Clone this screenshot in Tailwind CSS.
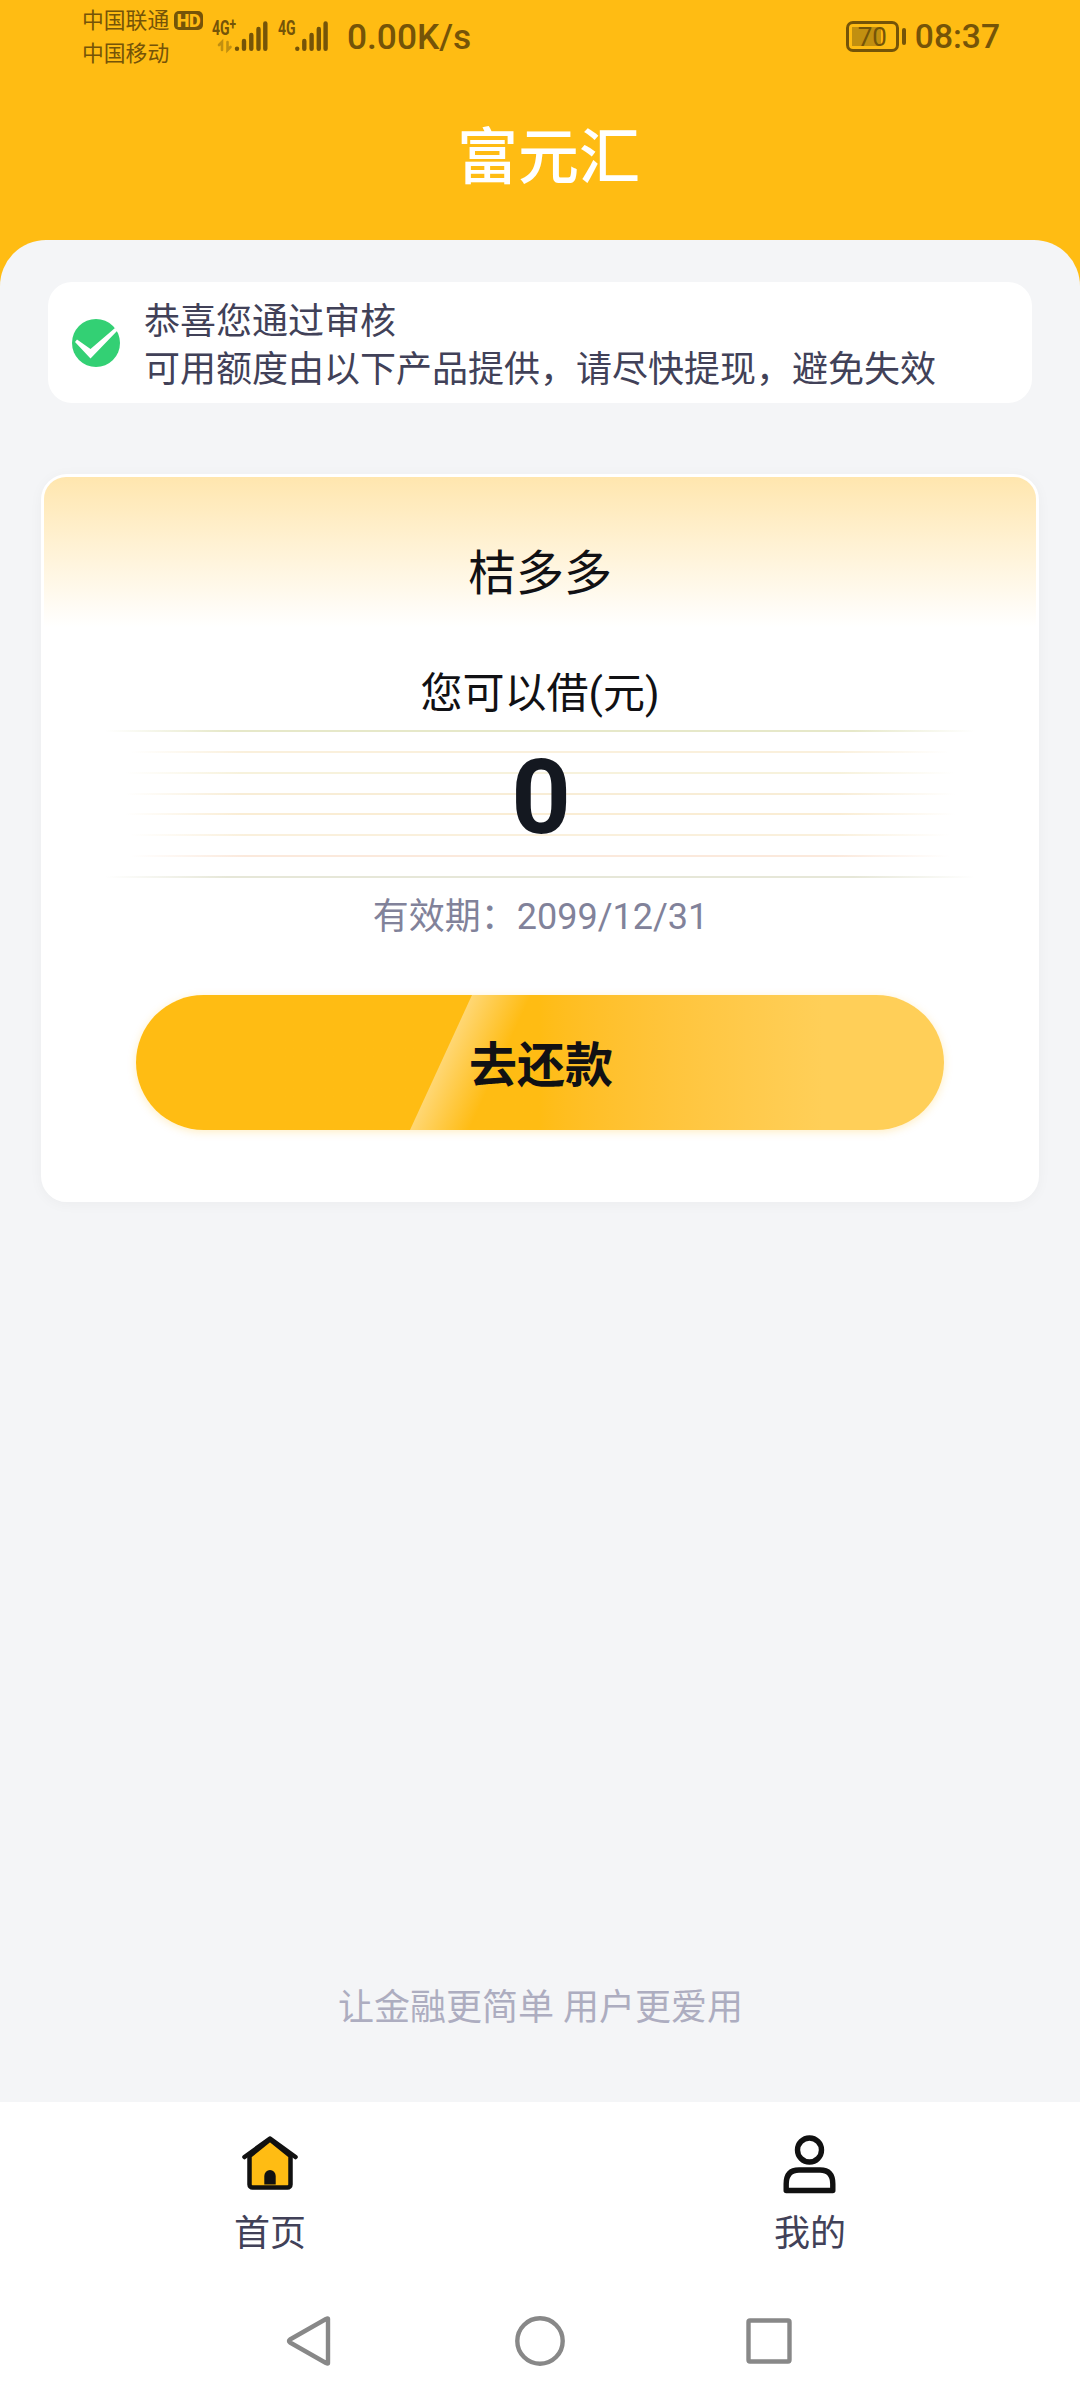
<!DOCTYPE html>
<html lang="zh-CN">
<head>
<meta charset="utf-8">
<title>富元汇</title>
<script src="https://cdn.jsdelivr.net/npm/@tailwindcss/browser@4"></script>
</head>
<body class="w-[1080px] h-[2400px] overflow-hidden bg-[#f4f5f7] font-['Roboto','Noto_Sans_CJK_SC',sans-serif] text-[#111114] flex flex-col">
  <header class="h-[300px] shrink-0 bg-[#ffbc13] flex flex-col">
    <!-- status bar -->
    <div class="h-[74px] flex items-start pl-[82px] pr-[80px] text-[#755408]">
      <div class="w-[88px] flex flex-col text-[21.8px] leading-[33px] pt-[4px] whitespace-nowrap"><span>中国联通</span><span>中国移动</span></div>
      <div class="ml-[4px] mt-[11px] w-[29px] h-[19px] rounded-[5px] bg-[#755408] text-[#ffbc13] text-[18px] leading-[20px] font-black text-center tracking-tight">HD</div>
      <div class="ml-[9px] w-[56px] flex relative">
        <span class="text-[20px] leading-[20px] mt-[18px] font-bold inline-block origin-left scale-x-[0.7] whitespace-nowrap">4G<span class="relative -top-[5px] text-[17px] leading-[0]">+</span></span>
        <svg class="absolute left-0 top-[20px]" width="58" height="34" viewBox="0 0 58 34" fill="none" stroke="#755408" stroke-width="4.4" stroke-linecap="round"><path d="M25 28.6v.1M32 21v7.700M39.300 15v13.700M46.500 9v19.700M53.300 3.500v25.200"/><path d="M7 25l3-3v8M15.500 22v8l3-3" stroke="#c18f10" stroke-width="2.600"/></svg>
      </div>
      <div class="ml-[10px] w-[52px] flex relative">
        <span class="text-[20px] leading-[20px] mt-[18px] font-bold inline-block origin-left scale-x-[0.7]">4G</span>
        <svg class="absolute left-0 top-[20px]" width="58" height="34" viewBox="0 0 58 34" fill="none" stroke="#755408" stroke-width="4.4" stroke-linecap="round"><path d="M19.300 28.600v.1M26.300 21v7.700M33.600 15v13.700M40.800 9v19.700M47.600 3.500v25.200"/></svg>
      </div>
      <span class="ml-[17px] mt-[17px] text-[35.3px] leading-[41px] font-medium">0.00K/s</span>
      <div class="ml-auto flex">
        <div class="mt-[21px] w-[53px] h-[31px] border-[3px] border-[#755408] rounded-[7px] flex relative p-[3px]">
          <div class="w-[29px] h-[19px] bg-[#c18f10]"></div>
          <span class="absolute inset-0 text-center text-[26px] leading-[26px]">70</span>
        </div>
        <div class="mt-[28px] ml-[3px] w-[4px] h-[17px] rounded-full bg-[#755408]"></div>
        <span class="ml-[9px] mt-[17px] text-[33.600px] leading-[40px] font-medium">08:37</span>
      </div>
    </div>
    <h1 class="h-[166px] flex justify-center pt-[40px] pl-[17px] text-[61px] leading-[88px] font-medium text-white">富元汇</h1>
  </header>

  <main class="-mt-[60px] h-[1862px] shrink-0 bg-[#f4f5f7] rounded-t-[46px] flex flex-col pt-[42px]">
    <section class="mx-[48px] h-[121px] bg-white rounded-[24px] flex items-center pl-[24px] text-[36px] leading-[48px] text-[#414158]">
      <svg width="48" height="48" viewBox="0 0 48 48"><circle cx="24" cy="24" r="24" fill="#33d074"/><path d="M3 23L5 20.500L18.500 30L43 9L45.500 11.500L18.500 39.500z" fill="#fff"/></svg>
      <div class="ml-[24px] pt-[6px]"><p>恭喜您通过审核</p><p>可用额度由以下产品提供，请尽快提现，避免失效</p></div>
    </section>

    <section class="mt-[71px] mx-[41px] h-[728px] bg-white border-3 border-white rounded-[26px] shadow-[0_2px_14px_rgba(0,0,0,0.04)] flex flex-col items-center">
      <div class="w-full h-[150px] shrink-0 rounded-t-[22px] bg-linear-to-b from-[#ffe6ae] to-white flex justify-center pt-[61px]">
        <h2 class="text-[48px] leading-[72px]">桔多多</h2>
      </div>
      <p class="mt-[37px] text-[42px] leading-[60px]">您可以借(元)</p>
      <div class="mt-[6px] relative w-[870px] h-[148px] flex flex-col items-center justify-between">
        <i class="block w-full h-[2px] bg-[linear-gradient(to_right,transparent,#e6e8c9_14%,#e6e8c9_86%,transparent)]"></i>
        <i class="block w-[820px] h-[2px] bg-[linear-gradient(to_right,transparent,#faf0dc_14%,#faf0dc_86%,transparent)]"></i>
        <i class="block w-[830px] h-[2px] bg-[linear-gradient(to_right,transparent,#f7f2dc_14%,#f7f2dc_86%,transparent)]"></i>
        <i class="block w-[830px] h-[2px] bg-[linear-gradient(to_right,transparent,#f8edd6_14%,#f8edd6_86%,transparent)]"></i>
        <i class="block w-[830px] h-[2px] bg-[linear-gradient(to_right,transparent,#faedd4_14%,#faedd4_86%,transparent)]"></i>
        <i class="block w-[820px] h-[2px] bg-[linear-gradient(to_right,transparent,#faf0dc_14%,#faf0dc_86%,transparent)]"></i>
        <i class="block w-[820px] h-[2px] bg-[linear-gradient(to_right,transparent,#fbe9dc_14%,#fbe9dc_86%,transparent)]"></i>
        <i class="block w-full h-[2px] bg-[linear-gradient(to_right,transparent,#e6e7d8_14%,#e6e7d8_86%,transparent)]"></i>
        <strong class="absolute inset-x-0 top-[6px] pl-[2px] text-center text-[104px] leading-[124px] font-bold text-[#141820]">0</strong>
      </div>
      <p class="mt-[13px] pl-[1px] text-[36px] leading-[52px] text-[#81829a]">有效期：2099/12/31</p>
      <button class="mt-[52px] w-[808px] h-[135px] shrink-0 rounded-full relative overflow-hidden bg-linear-to-r from-[#ffbc13] from-50% to-[#ffcf58] to-85% shadow-[0_2px_8px_rgba(255,188,19,0.25)] flex items-center justify-center">
        <svg class="absolute left-[274px] top-0" width="130" height="135" viewBox="0 0 130 135"><defs><linearGradient id="g" gradientUnits="userSpaceOnUse" x1="31" y1="67" x2="80" y2="89.500"><stop stop-color="#ffd774"/><stop offset="1" stop-color="#ffd774" stop-opacity="0"/></linearGradient></defs><path d="M62 0h68L68 135H0z" fill="url(#g)"/></svg>
        <span class="relative pt-[6px] pl-[2px] text-[48px] leading-[70px] font-bold">去还款</span>
      </button>
    </section>
    <p class="mt-auto mb-[68px] pl-[1px] text-center text-[36px] leading-[52px] text-[#adadc0]">让金融更简单 用户更爱用</p>
  </main>

  <nav class="h-[168px] shrink-0 bg-white grid grid-cols-2 text-[36px] leading-[52px] text-[#414158]">
    <a class="flex flex-col items-center pt-[32px]">
      <svg width="58" height="62" viewBox="0 0 58 62"><path d="M8.500 22L29 5.500L49.500 22V50.500a3 3 0 0 1-3 3h-35a3 3 0 0 1-3-3z" fill="#ffbc13" stroke="#111" stroke-width="4.500"/><path d="M3.500 23L29 4.500L54.500 23" fill="none" stroke="#111" stroke-width="4.500" stroke-linecap="round" stroke-linejoin="round"/><path d="M23.300 50.500V42a5.700 6 0 0 1 11.400 0v8.500z" fill="#111"/></svg>
      <span class="mt-[12px]">首页</span>
    </a>
    <a class="flex flex-col items-center pt-[32px]">
      <svg width="58" height="62" viewBox="0 0 58 62" fill="none" stroke="#111" stroke-width="5.400"><circle cx="28.500" cy="16" r="12"/><path d="M5.200 56.500V50Q5.200 36 18 36h21Q51.800 36 51.800 50v6.500z" stroke-linejoin="round"/></svg>
      <span class="mt-[12px]">我的</span>
    </a>
  </nav>
  <footer class="h-[130px] shrink-0 bg-white flex justify-center gap-[170px] pt-[41px]">
    <svg width="60" height="60" viewBox="0 0 60 60" fill="none" stroke="#888" stroke-width="4.400" stroke-linejoin="round"><path d="M48 8v44q0 1-2 0L10 31.500q-2-1.500 0-3L46 8q2-1 2 0z"/></svg>
    <svg width="60" height="60" viewBox="0 0 60 60" fill="none" stroke="#888" stroke-width="4.400"><circle cx="30" cy="30" r="22.700"/></svg>
    <svg width="60" height="60" viewBox="0 0 60 60" fill="none" stroke="#888" stroke-width="4.400"><rect x="8.500" y="9.500" width="41" height="41" rx="1.500"/></svg>
  </footer>
</body>
</html>
